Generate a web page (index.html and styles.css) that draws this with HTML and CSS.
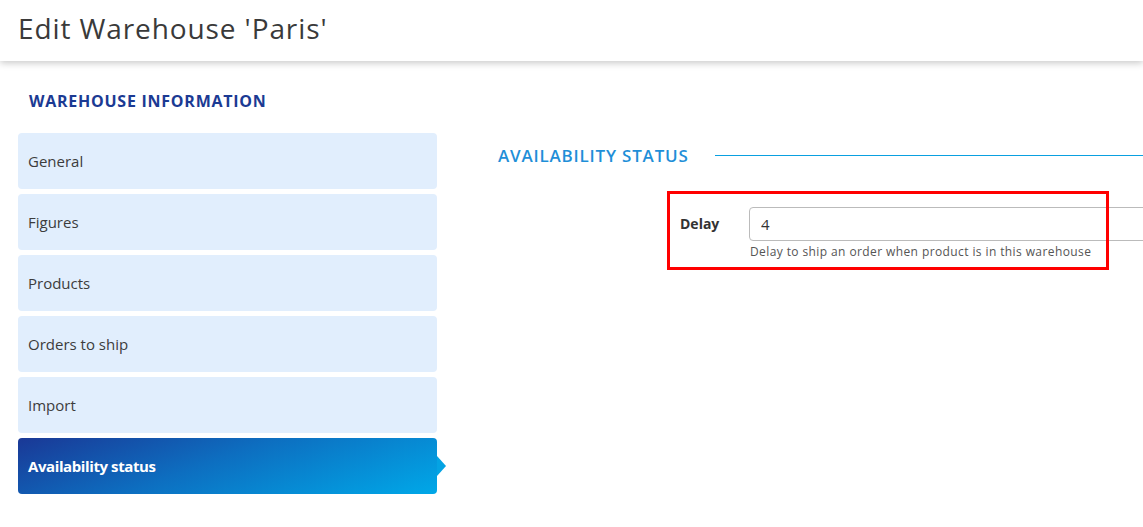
FILE: index.html
```html
<!DOCTYPE html>
<html>
<head>
<meta charset="utf-8">
<link rel="stylesheet" href="styles.css">
</head>
<body>
<header class="page-header">
  <h1 class="page-title">Edit Warehouse 'Paris'</h1>
</header>
<main class="layout">
  <aside class="sidebar">
    <h2 class="sidebar-title">WAREHOUSE INFORMATION</h2>
    <nav class="tabs">
      <a class="tab">General</a>
      <a class="tab">Figures</a>
      <a class="tab">Products</a>
      <a class="tab">Orders to ship</a>
      <a class="tab">Import</a>
      <a class="tab active">Availability status</a>
    </nav>
  </aside>
  <section class="content">
    <div class="section-head">
      <h3 class="section-title">AVAILABILITY STATUS</h3>
      <span class="section-line"></span>
    </div>
    <div class="form-area">
      <div class="form-row">
        <label class="form-label">Delay</label>
        <div class="form-field">
          <input class="form-input" type="text" value="4">
          <div class="form-help">Delay to ship an order when product is in this warehouse</div>
        </div>
      </div>
      <div class="highlight"></div>
    </div>
  </section>
</main>
</body>
</html>
```

FILE: styles.css
```css
html, body {
  margin: 0;
  padding: 0;
  background: #fff;
  overflow: hidden;
}
body {
  font-family: "Open Sans", "Noto Sans", sans-serif;
  color: #333;
  width: 1143px;
  height: 527px;
}
.page-header {
  height: 61px;
  background: #fff;
  box-shadow: 0 2px 7px rgba(0, 0, 0, 0.22);
  display: flex;
  align-items: center;
  padding-left: 18px;
  position: relative;
  z-index: 1;
}
.page-title {
  margin: 0;
  font-weight: 400;
  font-size: 28px;
  color: #3a3a3a;
  letter-spacing: 0.9px;
  position: relative;
  top: -3px;
}
.layout {
  display: flex;
  padding-left: 18px;
}
.sidebar {
  width: 419px;
  flex: none;
}
.sidebar-title {
  margin: 0;
  height: 72px;
  padding-left: 11px;
  box-sizing: border-box;
  padding-top: 29px;
  font-size: 16px;
  font-weight: 700;
  color: #1b3a93;
  line-height: 22px;
  letter-spacing: 0.75px;
}
.tabs {
  display: flex;
  flex-direction: column;
  gap: 5px;
}
.tab {
  height: 56px;
  border-radius: 4px;
  background: #e1eefd;
  display: flex;
  align-items: center;
  padding-left: 10px;
  font-size: 15px;
  color: #3c3c3c;
  position: relative;
}
.tab.active {
  background: linear-gradient(160deg, #1a3896 0%, #0d6ec0 45%, #00a8e8 100%);
  color: #fff;
  font-weight: 700;
  letter-spacing: -0.4px;
}
.tab.active::after {
  content: "";
  position: absolute;
  right: -9px;
  top: 18px;
  border-top: 10px solid transparent;
  border-bottom: 10px solid transparent;
  border-left: 9px solid #04a3e3;
}
.content {
  flex: 1;
  margin-left: 61px;
  min-width: 0;
}
.section-head {
  display: flex;
  align-items: center;
  height: 52px;
  margin-top: 68px;
}
.section-title {
  margin: 0;
  font-size: 17px;
  font-weight: 600;
  color: #1f8fd8;
  white-space: nowrap;
  letter-spacing: 0.8px;
}
.section-line {
  flex: 1;
  height: 1px;
  background: #0aa0e0;
  margin-left: 26px;
  margin-right: -20px;
}
.form-area {
  position: relative;
  margin-top: 10px;
  margin-left: 169px;
  height: 78px;
}
.form-row {
  display: flex;
  padding-left: 13px;
  padding-top: 16px;
}
.form-label {
  width: 69px;
  flex: none;
  font-size: 14px;
  font-weight: 700;
  color: #333;
  line-height: 34px;
}
.form-field {
  flex: 1;
  margin-right: -30px;
}
.form-input {
  display: block;
  width: 100%;
  box-sizing: border-box;
  height: 34px;
  border: 1px solid #bbbbbb;
  border-radius: 4px;
  padding: 0 11px;
  font-family: inherit;
  font-size: 15px;
  color: #333;
  background: #fff;
}
.form-help {
  margin-top: 3px;
  padding-left: 1px;
  font-size: 12px;
  color: #555;
  line-height: 16px;
  letter-spacing: 0.4px;
}
.highlight {
  position: absolute;
  left: 0;
  top: 0;
  width: 442px;
  height: 79px;
  box-sizing: border-box;
  border: 3px solid #ff0000;
  pointer-events: none;
}
```
